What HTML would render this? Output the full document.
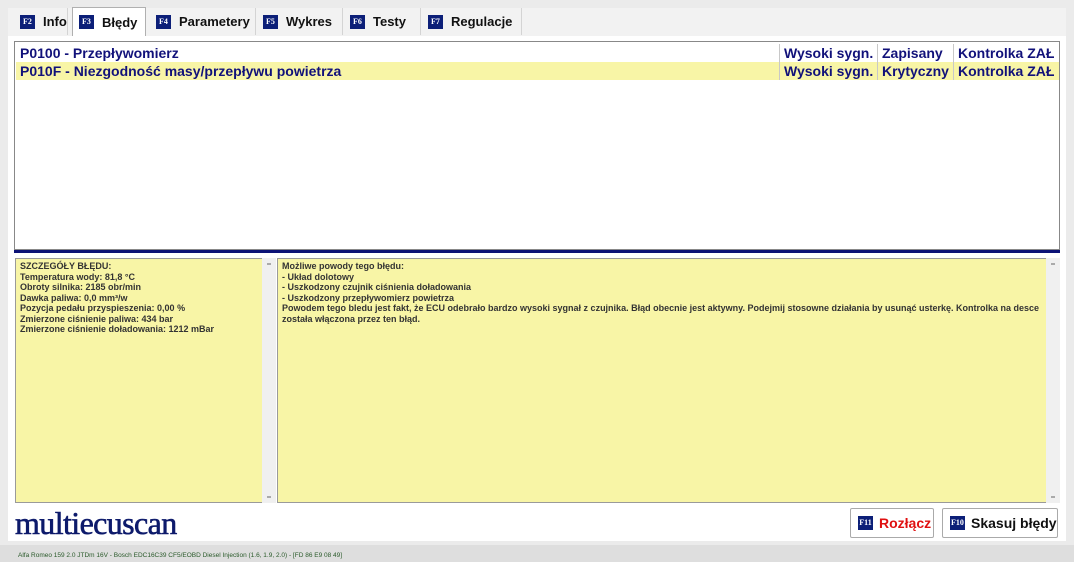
<!DOCTYPE html>
<html><head><meta charset="utf-8"><style>
*{box-sizing:border-box;margin:0;padding:0}
body{width:1074px;height:562px;background:#ebebeb;font-family:"Liberation Sans",Arial,sans-serif;position:relative;overflow:hidden}
.main{position:absolute;left:8px;top:8px;width:1058px;height:533px;background:#fff}
.tabbar{position:absolute;left:8px;top:8px;width:1058px;height:28px;background:#f2f2f2}
.tab{position:absolute;top:8px;height:27px;font-size:13px;font-weight:bold;color:#111;display:flex;align-items:center;padding-left:6px;border-right:1px solid #d4d4d4;white-space:nowrap}
.tab.sel{background:#fff;border:1px solid #b0b0b0;border-bottom:none;top:7px;height:29px}
.k{display:inline-block;background:#0c1f78;color:#fff;font-size:8px;font-weight:bold;width:15px;height:14px;line-height:14px;text-align:center;margin-right:8px;font-family:"Liberation Serif",serif;flex:none}
.tbl{position:absolute;left:14px;top:41px;width:1046px;height:209px;border:1px solid #888;background:#fff}
.row{position:absolute;left:1px;width:1043px;height:18px;font-size:14px;font-weight:bold;color:#11117a;line-height:18px;white-space:nowrap}
.row span{position:absolute;top:0;height:18px;padding-left:4px;border-left:1px solid #c8c8c8}
.blue{position:absolute;left:14px;top:250px;width:1046px;height:3px;background:#0c1276}
.pane{position:absolute;background:#f8f5a6;border:1px solid #9a9a9a;font-size:9px;font-weight:bold;color:#333;line-height:10.5px;padding:2px 4px}
.sb{position:absolute;background:#f0f0f0;width:14px}
.sb:before,.sb:after{content:"";position:absolute;left:5px;width:4px;height:2px;background:#aaa}
.sb:before{top:5px}.sb:after{bottom:5px}
.logo{position:absolute;left:15px;top:505px;font-family:"Liberation Serif",serif;font-size:32px;color:#0d1a6b;letter-spacing:-0.6px;-webkit-text-stroke:0.6px #0d1a6b}
.btn{position:absolute;top:508px;height:30px;border:1px solid #aaa;border-radius:2px;background:#fff;font-size:14px;font-weight:bold;display:flex;align-items:center;padding-left:8px;white-space:nowrap}
.status{position:absolute;left:0;top:545px;width:1074px;height:17px;background:#dedede;font-size:6.5px;color:#2a5a2a;padding:7px 0 0 18px}
</style></head><body>
<div class="main"></div>
<div class="tabbar"></div>
<div class="tab" style="left:14px;width:54px"><span class="k">F2</span>Info</div>
<div class="tab sel" style="left:72px;width:74px"><span class="k">F3</span>Błędy</div>
<div class="tab" style="left:150px;width:106px"><span class="k">F4</span>Parametery</div>
<div class="tab" style="left:257px;width:86px"><span class="k">F5</span>Wykres</div>
<div class="tab" style="left:344px;width:77px"><span class="k">F6</span>Testy</div>
<div class="tab" style="left:422px;width:100px"><span class="k">F7</span>Regulacje</div>
<div class="tbl">
<div class="row" style="top:2px;background:#fff"><span style="left:0;border:none">P0100 - Przepływomierz</span><span style="left:763px">Wysoki sygn.</span><span style="left:861px">Zapisany</span><span style="left:937px">Kontrolka ZAŁ</span></div>
<div class="row" style="top:20px;background:#f8f5a6"><span style="left:0;border:none">P010F - Niezgodność masy/przepływu powietrza</span><span style="left:763px">Wysoki sygn.</span><span style="left:861px">Krytyczny</span><span style="left:937px">Kontrolka ZAŁ</span></div>
</div>
<div class="blue"></div>
<div class="pane" style="left:15px;top:258px;width:248px;height:245px">SZCZEGÓŁY BŁĘDU:<br>Temperatura wody: 81,8 °C<br>Obroty silnika: 2185 obr/min<br>Dawka paliwa: 0,0 mm³/w<br>Pozycja pedału przyspieszenia: 0,00 %<br>Zmierzone ciśnienie paliwa: 434 bar<br>Zmierzone ciśnienie doładowania: 1212 mBar</div>
<div class="sb" style="left:262px;top:258px;height:245px"></div>
<div class="pane" style="left:277px;top:258px;width:770px;height:245px">Możliwe powody tego błędu:<br>- Układ dolotowy<br>- Uszkodzony czujnik ciśnienia doładowania<br>- Uszkodzony przepływomierz powietrza<br>Powodem tego bledu jest fakt, że ECU odebrało bardzo wysoki sygnał z czujnika. Błąd obecnie jest aktywny. Podejmij stosowne działania by usunąć usterkę. Kontrolka na desce została włączona przez ten błąd.</div>
<div class="sb" style="left:1046px;top:258px;height:245px"></div>
<div class="logo">multiecuscan</div>
<div class="btn" style="left:850px;width:84px;color:#e01010;padding-left:7px"><span class="k" style="margin-right:6px">F11</span>Rozłącz</div>
<div class="btn" style="left:942px;width:116px;color:#111;padding-left:7px"><span class="k" style="margin-right:6px">F10</span>Skasuj błędy</div>
<div class="status">Alfa Romeo 159 2.0 JTDm 16V - Bosch EDC16C39 CF5/EOBD Diesel Injection (1.6, 1.9, 2.0) - [FD 86 E9 08 49]</div>
</body></html>
